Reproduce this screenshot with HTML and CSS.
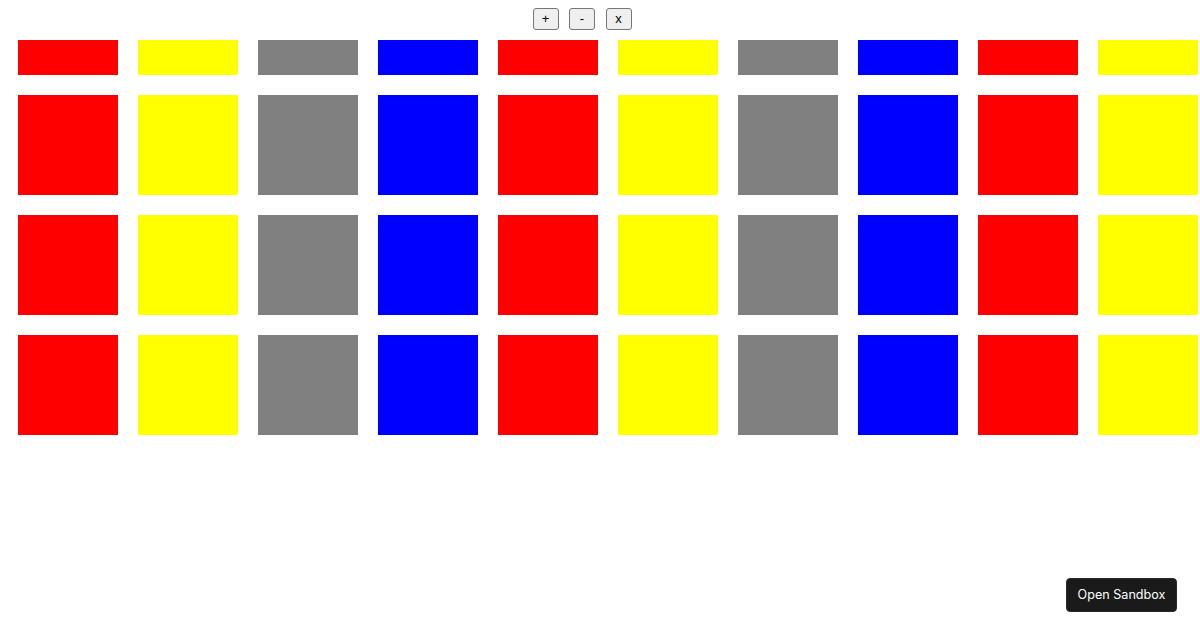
FILE: index.html
```html
<!DOCTYPE html>
<html>
<head>
<meta charset="utf-8">
<link rel="stylesheet" href="styles.css">
</head>
<body>
<div class="toolbar">
  <button class="tool">+</button>
  <button class="tool">-</button>
  <button class="tool">x</button>
</div>
<div class="viewport">
  <div class="grid">
    <div class="sq red"></div><div class="sq yellow"></div><div class="sq gray"></div><div class="sq blue"></div><div class="sq red"></div><div class="sq yellow"></div><div class="sq gray"></div><div class="sq blue"></div><div class="sq red"></div><div class="sq yellow"></div>
    <div class="sq red"></div><div class="sq yellow"></div><div class="sq gray"></div><div class="sq blue"></div><div class="sq red"></div><div class="sq yellow"></div><div class="sq gray"></div><div class="sq blue"></div><div class="sq red"></div><div class="sq yellow"></div>
    <div class="sq red"></div><div class="sq yellow"></div><div class="sq gray"></div><div class="sq blue"></div><div class="sq red"></div><div class="sq yellow"></div><div class="sq gray"></div><div class="sq blue"></div><div class="sq red"></div><div class="sq yellow"></div>
    <div class="sq red"></div><div class="sq yellow"></div><div class="sq gray"></div><div class="sq blue"></div><div class="sq red"></div><div class="sq yellow"></div><div class="sq gray"></div><div class="sq blue"></div><div class="sq red"></div><div class="sq yellow"></div>
  </div>
</div>
<button class="sandbox">Open Sandbox</button>
</body>
</html>
```
FILE: styles.css
```css
html, body {
  margin: 0;
  padding: 0;
  background: #fff;
  width: 1200px;
  height: 630px;
  overflow: hidden;
  font-family: "Liberation Sans", Arial, sans-serif;
}
.toolbar {
  height: 40px;
  box-sizing: border-box;
  padding: 8px 36px 0 0;
  display: flex;
  justify-content: center;
  align-items: flex-start;
  gap: 10.5px;
}
.tool {
  width: 26px;
  height: 22px;
  padding: 0;
  margin: 0;
  background: #efefef;
  border: 1px solid #767676;
  border-radius: 3px;
  font-family: "Liberation Sans", Arial, sans-serif;
  font-size: 13px;
  color: #000;
  line-height: 20px;
}
.viewport {
  height: 590px;
  overflow: hidden;
}
.grid {
  margin-top: -65px;
  padding-left: 18px;
  display: grid;
  grid-template-columns: repeat(10, 100px);
  grid-auto-rows: 100px;
  gap: 20px;
}
.red { background: #ff0000; }
.yellow { background: #ffff00; }
.gray { background: #808080; }
.blue { background: #0000ff; }
.sandbox {
  position: fixed;
  right: 23px;
  bottom: 18px;
  width: 111px;
  height: 34px;
  background: #1a1a1a;
  color: #fff;
  border: 1px solid #2a2a2a;
  border-radius: 4px;
  font-family: Inter, "Liberation Sans", sans-serif;
  font-size: 12.6px;
  padding: 0 0 1px 0;
}
```
